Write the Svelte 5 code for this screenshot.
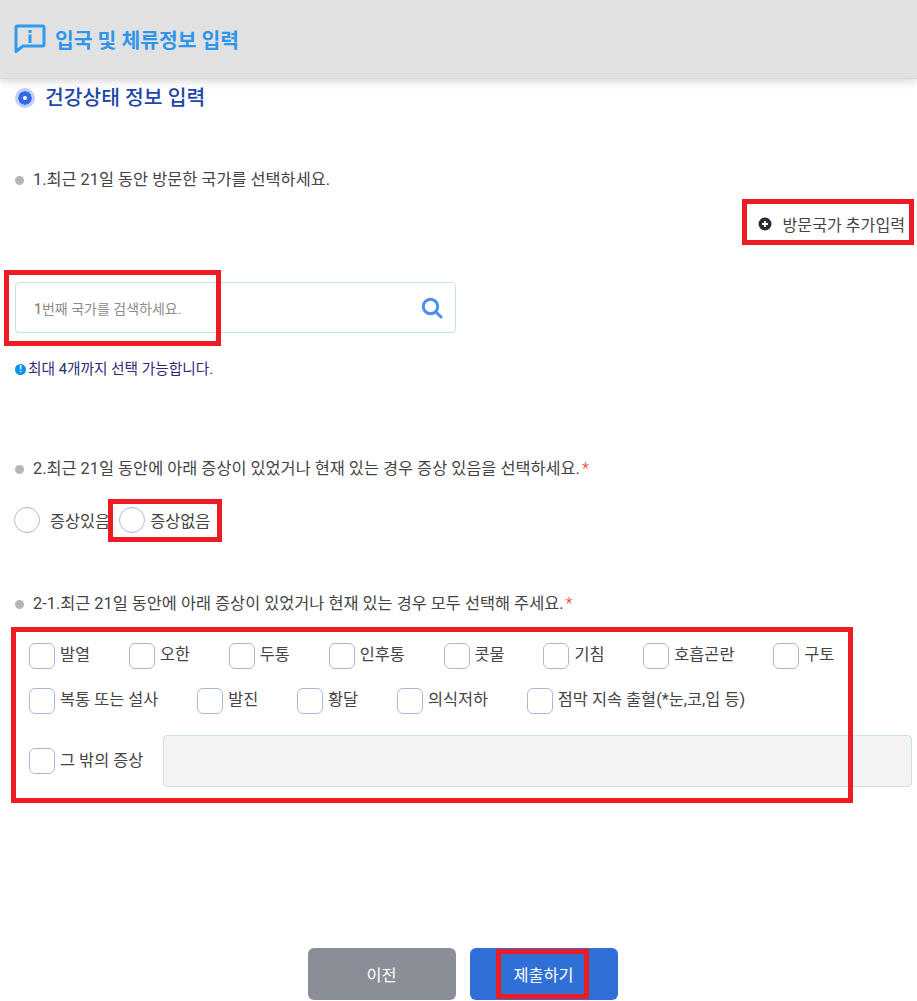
<script>
  const rowOne = ['발열', '오한', '두통', '인후통', '콧물', '기침', '호흡곤란', '구토'];
  const rowTwo = ['복통 또는 설사', '발진', '황달', '의식저하', '점막 지속 출혈(*눈,코,입 등)'];
</script>

<div class="page">
  <header>
    <svg class="info" width="32" height="30" viewBox="0 0 32 30" fill="none">
      <path d="M2 3.5 Q2 2 3.5 2 H28.5 Q30 2 30 3.5 V20.5 Q30 22 28.5 22 H9 L2 27.5 Z" stroke="#2f9bf0" stroke-width="3" stroke-linejoin="round" />
      <rect x="14.5" y="10.5" width="3" height="8.5" fill="#2f9bf0" />
      <rect x="14.5" y="6" width="3" height="3" fill="#2f9bf0" />
    </svg>
    <h1>입국 및 체류정보 입력</h1>
  </header>

  <main>
    <h2><span class="dot"></span>건강상태 정보 입력</h2>

    <p class="question q1"><span class="bullet"></span>1.최근 21일 동안 방문한 국가를 선택하세요.</p>

    <div class="add-row">
      <svg width="14" height="14" viewBox="0 0 14 14">
        <circle cx="7" cy="7" r="6.5" fill="#2b2d33" />
        <path d="M7 4v6M4 7h6" stroke="#fff" stroke-width="1.8" />
      </svg>
      <span>방문국가 추가입력</span>
    </div>

    <div class="search">
      <span class="placeholder"><b>1</b>번째 국가를 검색하세요.</span>
      <svg width="22" height="22" viewBox="0 0 22 22" fill="none">
        <circle cx="9.5" cy="9.5" r="7.2" stroke="#4a8df5" stroke-width="3" />
        <path d="M15 15l5 5" stroke="#4a8df5" stroke-width="3" stroke-linecap="round" />
      </svg>
    </div>

    <p class="note"><span class="note-icon">!</span>최대 4개까지 선택 가능합니다.</p>

    <p class="question q2"><span class="bullet"></span>2.최근 21일 동안에 아래 증상이 있었거나 현재 있는 경우 증상 있음을 선택하세요.<em>*</em></p>

    <div class="radios">
      <label><span class="radio"></span><span class="radio-text">증상있음</span></label>
      <label><span class="radio"></span><span class="radio-text">증상없음</span></label>
    </div>

    <p class="question q3"><span class="bullet"></span>2-1.최근 21일 동안에 아래 증상이 있었거나 현재 있는 경우 모두 선택해 주세요.<em>*</em></p>

    <div class="checks">
      <div class="check-row">
        {#each rowOne as item}
          <label><span class="box"></span>{item}</label>
        {/each}
      </div>
      <div class="check-row">
        {#each rowTwo as item}
          <label><span class="box"></span>{item}</label>
        {/each}
      </div>
      <div class="other-row">
        <label><span class="box"></span>그 밖의 증상</label>
        <div class="other-input"></div>
      </div>
    </div>

    <div class="buttons">
      <button class="prev">이전</button>
      <button class="submit">제출하기</button>
    </div>
  </main>

  <!-- red annotation boxes sit over the form -->
  <div class="mark m1"></div>
  <div class="mark m2"></div>
  <div class="mark m3"></div>
  <div class="mark m4"></div>
  <div class="mark m5"></div>
</div>

<style>
  :global(body) {
    background: #fff;
    overflow: hidden;
  }

  .page {
    position: relative;
    width: 917px;
    height: 1001px;
    overflow: hidden;
    font-family: Roboto, "Noto Sans CJK KR", sans-serif;
    font-size: 16.35px;
    color: #444;
  }

  header {
    height: 79px;
    box-sizing: border-box;
    background: #e1e1e1;
    border-bottom: 1px solid #c9dde8;
    box-shadow: 0 3px 8px rgba(0, 0, 0, 0.14);
    display: flex;
    align-items: center;
    padding: 1px 0 2px 14px;
    gap: 9px;
  }

  h1 {
    margin: 0;
    font-size: 20.4px;
    font-weight: 700;
    color: #2f96ee;
  }

  main {
    padding-left: 15px;
  }

  h2 {
    margin: 6px 0 0;
    height: 26px;
    line-height: 26px;
    display: flex;
    align-items: center;
    gap: 10px;
    font-size: 20.4px;
    font-weight: 500;
    color: #1c47a8;
  }

  .dot {
    width: 4px;
    height: 4px;
    border-radius: 50%;
    background: #fff;
    border: 5px solid #3468e8;
    outline: 3px solid #bcd0fa;
    outline-offset: 0;
    margin: 0 3px;
  }

  .question {
    margin: 0;
    height: 24px;
    line-height: 24px;
    display: flex;
    align-items: center;
  }

  .question em {
    color: #e8332a;
    font-style: normal;
    font-weight: 300;
    margin-left: 2px;
  }

  .bullet {
    width: 9px;
    height: 9px;
    border-radius: 50%;
    background: #b5b5b5;
    margin-right: 9px;
    flex: none;
  }

  .q1 {
    margin-top: 57px;
  }

  .q2 {
    margin-top: 76px;
  }

  .q3 {
    margin-top: 57px;
  }

  .add-row {
    display: flex;
    justify-content: flex-end;
    align-items: center;
    gap: 11px;
    margin-top: 20px;
    padding-right: 12px;
    height: 24px;
    font-size: 16.1px;
  }

  .search {
    margin-top: 46px;
    width: 441px;
    height: 51px;
    box-sizing: border-box;
    border: 1px solid #c5e0f0;
    border-radius: 4px;
    display: flex;
    align-items: center;
    justify-content: space-between;
    padding: 0 12px 0 18px;
  }

  .placeholder {
    font-size: 14px;
    color: #8d8d8d;
  }

  .placeholder b {
    color: #9a8672;
    font-weight: 500;
  }

  .note {
    margin: 24px 0 0;
    height: 24px;
    line-height: 24px;
    display: flex;
    align-items: center;
    gap: 2px;
    font-size: 14.7px;
    color: #2f2a78;
  }

  .note-icon {
    width: 11px;
    height: 11px;
    border-radius: 50%;
    background: #0d8ff2;
    color: #fff;
    font-size: 9px;
    line-height: 11px;
    text-align: center;
    font-weight: 700;
  }

  .radios {
    display: flex;
    margin-top: 24px;
    margin-left: -1px;
    height: 30px;
  }

  .radios label {
    display: flex;
    align-items: center;
  }

  .radio {
    width: 26px;
    height: 26px;
    box-sizing: border-box;
    border: 1px solid #a9bbdc;
    border-radius: 50%;
  }

  .radio-text {
    margin-left: 10px;
  }

  .radios label + label {
    margin-left: 9px;
  }

  .radios label + label .radio-text {
    margin-left: 5px;
  }

  .checks {
    margin-left: 14px;
    margin-top: 27px;
  }

  .check-row {
    display: flex;
    gap: 38.8px;
    height: 26px;
    margin-bottom: 19px;
    white-space: nowrap;
  }

  .checks label {
    display: flex;
    align-items: flex-start;
    line-height: 24px;
  }

  .box {
    width: 26px;
    height: 26px;
    box-sizing: border-box;
    border: 1px solid #a9bbdc;
    border-radius: 6px;
    margin-right: 5px;
  }

  .other-row {
    display: flex;
    align-items: center;
    gap: 20px;
    margin-top: 21px;
  }

  .other-row label {
    align-items: center;
    white-space: nowrap;
  }

  .other-input {
    width: 749px;
    height: 52px;
    box-sizing: border-box;
    background: #f3f3f3;
    border: 1px solid #c9e0ee;
    border-radius: 4px;
  }

  .buttons {
    display: flex;
    justify-content: center;
    gap: 14px;
    margin-top: 161px;
    margin-left: -7px;
  }

  button {
    width: 148px;
    height: 52px;
    border: 0;
    border-radius: 6px;
    color: #fff;
    font: inherit;
  }

  .prev {
    background: #8a8e96;
  }

  .submit {
    background: #2f6fd6;
  }

  .mark {
    position: absolute;
    box-sizing: border-box;
    border: 5px solid #ed1c24;
  }

  .m1 { left: 742px; top: 199px; width: 172px; height: 46px; }
  .m2 { left: 4px; top: 270px; width: 217px; height: 76px; }
  .m3 { left: 108px; top: 499px; width: 114px; height: 43px; }
  .m4 { left: 11px; top: 627px; width: 842px; height: 176px; }
  .m5 { left: 496px; top: 949px; width: 93px; height: 50px; }
</style>
